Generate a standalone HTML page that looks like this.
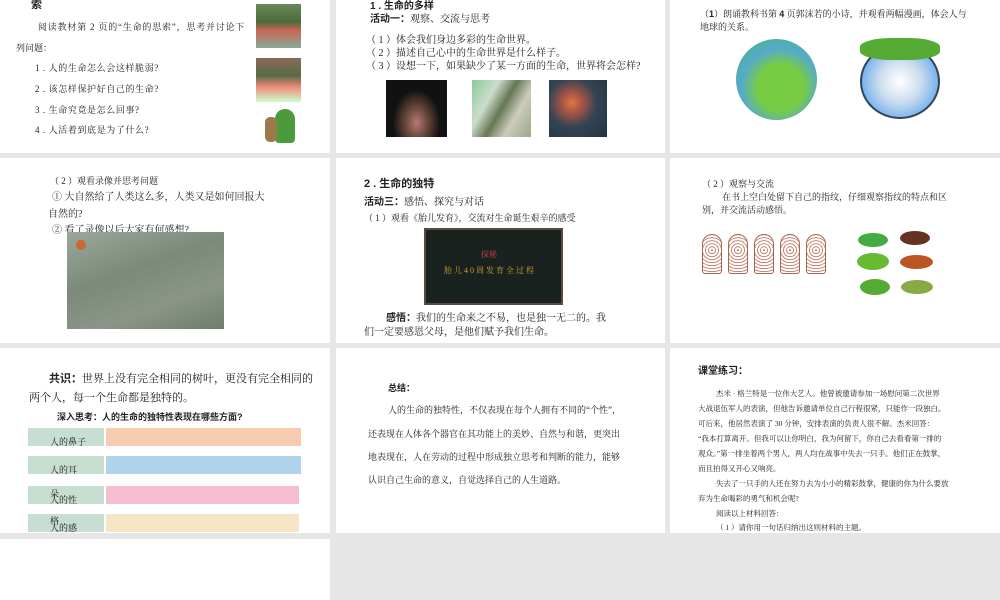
<!DOCTYPE html>
<html><head><meta charset="utf-8">
<style>
*{margin:0;padding:0;box-sizing:border-box}
body{width:1000px;height:600px;background:#e6e6e6;position:relative;overflow:hidden;font-family:"Liberation Serif","Noto Serif CJK SC",serif;color:#222}
.s{position:absolute;background:#fff;overflow:hidden}
.t{position:absolute;white-space:nowrap;line-height:1.2}
.b{font-family:"Liberation Sans","Noto Sans CJK SC",sans-serif;font-weight:bold}
.img{position:absolute}
</style></head><body>

<!-- Row 1 -->
<div class="s" style="left:0;top:0;width:330px;height:153px">
  <div class="t b" style="left:31px;top:-1px;font-size:11px">索</div>
  <div class="t" style="left:38px;top:22px;font-size:9px;letter-spacing:0.8px">阅读教材第 2 页的“生命的思索”，思考并讨论下</div>
  <div class="t" style="left:16px;top:43px;font-size:9px">列问题：</div>
  <div class="t" style="left:35px;top:63px;font-size:9px;letter-spacing:0.6px">1 . 人的生命怎么会这样脆弱?</div>
  <div class="t" style="left:35px;top:84px;font-size:9px;letter-spacing:0.6px">2 . 该怎样保护好自己的生命?</div>
  <div class="t" style="left:35px;top:105px;font-size:9px;letter-spacing:0.6px">3 . 生命究竟是怎么回事?</div>
  <div class="t" style="left:35px;top:125px;font-size:9px;letter-spacing:0.6px">4 . 人活着到底是为了什么?</div>
  <div class="img" style="left:256px;top:4px;width:45px;height:44px;background:linear-gradient(#6b8a5a,#4a6a3a 40%,#c65 60%,#8a9 100%)"></div>
  <div class="img" style="left:256px;top:58px;width:45px;height:44px;background:linear-gradient(#8a6a5a,#556b45 40%,#e87 65%,#cfc 100%)"></div>
  <div class="img" style="left:275px;top:109px;width:20px;height:34px;border-radius:10px 10px 4px 4px;background:#4b9a3b"></div>
  <div class="img" style="left:265px;top:117px;width:12px;height:25px;border-radius:5px;background:#9a7a4a"></div>
</div>

<div class="s" style="left:336px;top:0;width:329px;height:153px">
  <div class="t b" style="left:34px;top:1px;font-size:10px">1 . 生命的多样</div>
  <div class="t" style="left:34px;top:14px;font-size:10px"><b class="b">活动一：</b>观察、交流与思考</div>
  <div class="t" style="left:30px;top:35px;font-size:10px">（ 1 ）体会我们身边多彩的生命世界。</div>
  <div class="t" style="left:30px;top:48px;font-size:10px">（ 2 ）描述自己心中的生命世界是什么样子。</div>
  <div class="t" style="left:30px;top:61px;font-size:10px">（ 3 ）设想一下，如果缺少了某一方面的生命，世界将会怎样?</div>
  <div class="img" style="left:50px;top:80px;width:61px;height:57px;background:radial-gradient(ellipse at 50% 75%,#b77 0,#6a4a3a 25%,#111 55%)"></div>
  <div class="img" style="left:136px;top:80px;width:59px;height:57px;background:linear-gradient(120deg,#8c9 0,#cdc 30%,#675 50%,#ccb 70%,#9a8 100%)"></div>
  <div class="img" style="left:213px;top:80px;width:58px;height:57px;background:radial-gradient(circle at 40% 40%,#d74 0,#a54 20%,#345 50%,#234 100%)"></div>
</div>

<div class="s" style="left:670px;top:0;width:330px;height:153px">
  <div class="t" style="left:30px;top:9px;font-size:9px">（<b class="b">1</b>）朗诵教科书第 <b class="b">4</b> 页郭沫若的小诗，并观看两幅漫画，体会人与</div>
  <div class="t" style="left:30px;top:22px;font-size:9px">地球的关系。</div>
  <div class="img" style="left:66px;top:39px;width:81px;height:81px;border-radius:50%;background:radial-gradient(circle at 55% 60%,#7c4 0,#7c4 35%,#5ac 60%,#4b5 100%)"></div>
  <div class="img" style="left:190px;top:44px;width:80px;height:75px;border-radius:50%;border:2px solid #345;background:radial-gradient(circle at 50% 50%,#fff 0,#cde 40%,#6ae 80%)"></div>
  <div class="img" style="left:190px;top:38px;width:80px;height:22px;border-radius:40%;background:#5a3"></div>
</div>

<!-- Row 2 -->
<div class="s" style="left:0;top:158px;width:330px;height:185px">
  <div class="t" style="left:50px;top:18px;font-size:9px">（ 2 ）观看录像并思考问题</div>
  <div class="t" style="left:52px;top:34px;font-size:10px">① 大自然给了人类这么多，人类又是如何回报大</div>
  <div class="t" style="left:48px;top:51px;font-size:10px">自然的?</div>
  <div class="t" style="left:52px;top:67px;font-size:10px">② 看了录像以后大家有何感想?</div>
  <div class="img" style="left:67px;top:74px;width:157px;height:97px;background:linear-gradient(160deg,#9aa89a,#7c8a7a 40%,#8a9588 70%,#6f7d6d)"></div>
  <div class="img" style="left:76px;top:82px;width:10px;height:10px;border-radius:50%;background:#c63"></div>
</div>

<div class="s" style="left:336px;top:158px;width:329px;height:185px">
  <div class="t b" style="left:28px;top:20px;font-size:11px">2 . 生命的独特</div>
  <div class="t" style="left:28px;top:39px;font-size:10px"><b class="b">活动三：</b>感悟、探究与对话</div>
  <div class="t" style="left:28px;top:55px;font-size:9px">（ 1 ）观看《胎儿发育》，交流对生命诞生艰辛的感受</div>
  <div class="img" style="left:88px;top:70px;width:139px;height:77px;background:#1a2220;border:2px solid #5a4a40">
    <div class="t" style="left:55px;top:20px;font-size:8px;color:#c44">探秘</div>
    <div class="t" style="left:18px;top:36px;font-size:8px;color:#c9a030;letter-spacing:2px">胎儿40周发育全过程</div>
  </div>
  <div class="t" style="left:50px;top:155px;font-size:10px"><b class="b">感悟：</b>我们的生命来之不易，也是独一无二的。我</div>
  <div class="t" style="left:28px;top:169px;font-size:10px">们一定要感恩父母，是他们赋予我们生命。</div>
</div>

<div class="s" style="left:670px;top:158px;width:330px;height:185px">
  <div class="t" style="left:32px;top:21px;font-size:9px">（ 2 ）观察与交流</div>
  <div class="t" style="left:52px;top:34px;font-size:9px">在书上空白处留下自己的指纹，仔细观察指纹的特点和区</div>
  <div class="t" style="left:32px;top:47px;font-size:9px">别，并交流活动感悟。</div>
  <div class="img" style="left:32px;top:76px;width:20px;height:40px;border-radius:10px 10px 3px 3px;border:1px solid #a65;background:repeating-radial-gradient(circle at 50% 40%,#c87 0 1px,#fff 1px 3px)"></div>
  <div class="img" style="left:58px;top:76px;width:20px;height:40px;border-radius:10px 10px 3px 3px;border:1px solid #a65;background:repeating-radial-gradient(circle at 50% 40%,#c87 0 1px,#fff 1px 3px)"></div>
  <div class="img" style="left:84px;top:76px;width:20px;height:40px;border-radius:10px 10px 3px 3px;border:1px solid #a65;background:repeating-radial-gradient(circle at 50% 40%,#c87 0 1px,#fff 1px 3px)"></div>
  <div class="img" style="left:110px;top:76px;width:20px;height:40px;border-radius:10px 10px 3px 3px;border:1px solid #a65;background:repeating-radial-gradient(circle at 50% 40%,#c87 0 1px,#fff 1px 3px)"></div>
  <div class="img" style="left:136px;top:76px;width:20px;height:40px;border-radius:10px 10px 3px 3px;border:1px solid #a65;background:repeating-radial-gradient(circle at 50% 40%,#c87 0 1px,#fff 1px 3px)"></div>
  <div class="img" style="left:188px;top:75px;width:30px;height:14px;border-radius:50%;background:#4a4"></div>
  <div class="img" style="left:230px;top:73px;width:30px;height:14px;border-radius:50%;background:#632"></div>
  <div class="img" style="left:187px;top:95px;width:32px;height:17px;border-radius:50%;background:#6b3"></div>
  <div class="img" style="left:230px;top:97px;width:33px;height:14px;border-radius:50%;background:#b52"></div>
  <div class="img" style="left:190px;top:121px;width:30px;height:16px;border-radius:50%;background:#5a3"></div>
  <div class="img" style="left:231px;top:122px;width:32px;height:14px;border-radius:50%;background:#8a4"></div>
</div>

<!-- Row 3 -->
<div class="s" style="left:0;top:348px;width:330px;height:185px">
  <div class="t" style="left:49px;top:25px;font-size:11px"><b class="b">共识：</b>世界上没有完全相同的树叶，更没有完全相同的</div>
  <div class="t" style="left:29px;top:44px;font-size:11px">两个人，每一个生命都是独特的。</div>
  <div class="t b" style="left:57px;top:64px;font-size:9px">深入思考：人的生命的独特性表现在哪些方面?</div>
  <div class="img" style="left:28px;top:80px;width:76px;height:18px;background:#c6dfd0"></div>
  <div class="img" style="left:106px;top:80px;width:195px;height:18px;background:#f6cbb0"></div>
  <div class="t" style="left:50px;top:89px;font-size:9px">人的鼻子</div>
  <div class="img" style="left:28px;top:108px;width:76px;height:18px;background:#c6dfd0"></div>
  <div class="img" style="left:106px;top:108px;width:195px;height:18px;background:#b0d4ec"></div>
  <div class="t" style="left:50px;top:117px;font-size:9px">人的耳</div>
  <div class="img" style="left:28px;top:138px;width:76px;height:18px;background:#c6dfd0"></div>
  <div class="img" style="left:106px;top:138px;width:193px;height:18px;background:#f6bcd0"></div>
  <div class="t" style="left:50px;top:141px;font-size:9px">朵</div>
  <div class="t" style="left:50px;top:147px;font-size:9px">人的性</div>
  <div class="img" style="left:28px;top:166px;width:76px;height:18px;background:#c6dfd0"></div>
  <div class="img" style="left:106px;top:166px;width:193px;height:18px;background:#f6e6c6"></div>
  <div class="t" style="left:50px;top:168px;font-size:9px">格</div>
  <div class="t" style="left:50px;top:175px;font-size:9px">人的感</div>
</div>

<div class="s" style="left:336px;top:348px;width:329px;height:185px">
  <div class="t b" style="left:52px;top:35px;font-size:9px">总结：</div>
  <div class="t" style="left:52px;top:57px;font-size:9px">人的生命的独特性，不仅表现在每个人拥有不同的“个性”，</div>
  <div class="t" style="left:32px;top:81px;font-size:9px">还表现在人体各个器官在其功能上的美妙、自然与和谐，更突出</div>
  <div class="t" style="left:32px;top:104px;font-size:9px">地表现在，人在劳动的过程中形成独立思考和判断的能力，能够</div>
  <div class="t" style="left:32px;top:127px;font-size:9px">认识自己生命的意义，自觉选择自己的人生道路。</div>
</div>

<div class="s" style="left:670px;top:348px;width:330px;height:185px">
  <div class="t b" style="left:28px;top:18px;font-size:10px">课堂练习：</div>
  <div class="t" style="left:46px;top:41px;font-size:7.5px">杰米 · 格兰特是一位伟大艺人。他曾被邀请参加一场慰问第二次世界</div>
  <div class="t" style="left:28px;top:56px;font-size:7.5px">大战退伍军人的表演，但他告诉邀请单位自己行程很紧，只能作一段独白。</div>
  <div class="t" style="left:28px;top:71px;font-size:7.5px">可后来，他居然表演了 30 分钟，安排表演的负责人很不解。杰米回答：</div>
  <div class="t" style="left:28px;top:86px;font-size:7.5px">“我本打算离开。但我可以让你明白，我为何留下，你自己去看看第一排的</div>
  <div class="t" style="left:28px;top:101px;font-size:7.5px">观众。”第一排坐着两个男人，两人均在战事中失去一只手。他们正在鼓掌，</div>
  <div class="t" style="left:28px;top:116px;font-size:7.5px">而且拍得又开心又响亮。</div>
  <div class="t" style="left:46px;top:131px;font-size:7.5px">失去了一只手的人还在努力去为小小的精彩鼓掌，健康的你为什么要放</div>
  <div class="t" style="left:28px;top:146px;font-size:7.5px">弃为生命喝彩的勇气和机会呢?</div>
  <div class="t" style="left:46px;top:161px;font-size:7.5px">阅读以上材料回答：</div>
  <div class="t" style="left:46px;top:175px;font-size:7.5px">（ 1 ）请你用一句话归纳出这则材料的主题。</div>
</div>

<!-- Row 4 -->
<div class="s" style="left:0;top:539px;width:330px;height:61px"></div>

</body></html>
